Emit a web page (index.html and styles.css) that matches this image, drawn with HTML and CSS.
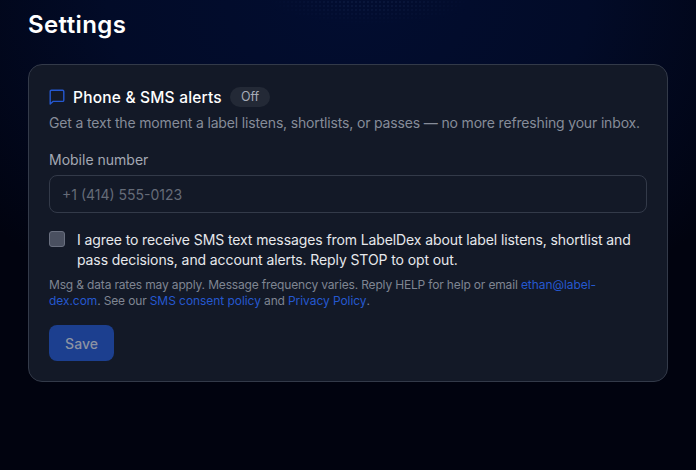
FILE: index.html
```html
<!DOCTYPE html>
<html lang="en">
<head>
    <meta charset="UTF-8">
    <meta name="viewport" content="width=device-width, initial-scale=1.0">
    <title>Settings</title>
    <link rel="stylesheet" href="styles.css">
</head>
<body>
    <div class="dots"></div>
    <main class="page">
        <h1>Settings</h1>
        <section class="card">
            <div class="card-head">
                <svg class="icon" width="16" height="16" viewBox="0 0 16 16" fill="none" stroke="#2558d0" stroke-width="1.4" stroke-linejoin="round">
                    <path d="M1.2 15V2.4c0-.7.5-1.2 1.2-1.2h11.2c.7 0 1.2.5 1.2 1.2v8.8c0 .7-.5 1.2-1.2 1.2H4z"/>
                </svg>
                <h2>Phone &amp; SMS alerts</h2>
                <span class="badge">Off</span>
            </div>
            <p class="lead">Get a text the moment a label listens, shortlists, or passes — no more refreshing your inbox.</p>

            <label class="field-label" for="phone">Mobile number</label>
            <input class="phone-input" id="phone" type="text" placeholder="+1 (414) 555-0123">

            <label class="consent">
                <span class="checkbox"></span>
                <span>I agree to receive SMS text messages from LabelDex about label listens, shortlist and pass decisions, and account alerts. Reply STOP to opt out.</span>
            </label>

            <p class="fineprint">Msg &amp; data rates may apply. Message frequency varies. Reply HELP for help or email <a href="#">ethan@label-</a><a href="#">dex.com</a>. See our <a href="#">SMS consent policy</a> and <a href="#">Privacy Policy</a>.</p>

            <button class="save-btn" disabled>Save</button>
        </section>
    </main>
</body>
</html>
```

FILE: styles.css
```css
* {
    box-sizing: border-box;
}
html, body {
    height: 100%;
}
body {
    margin: 0;
    font-family: 'Inter', sans-serif;
    color: #fff;
    overflow: hidden;
    position: relative;
    background:
        radial-gradient(ellipse 480px 340px at 50% 0%, #020d30 0%, #020b28 50%, rgba(2, 8, 28, 0) 100%),
        #01030f;
}
.dots {
    position: absolute;
    top: 0;
    left: 270px;
    width: 200px;
    height: 24px;
    background-image: radial-gradient(circle, rgba(120, 150, 220, 0.22) 0.5px, transparent 0.8px);
    background-size: 4px 4px;
    -webkit-mask-image: radial-gradient(ellipse at 50% 0%, #000 20%, transparent 75%);
    mask-image: radial-gradient(ellipse at 50% 0%, #000 20%, transparent 75%);
}
.page {
    position: relative;
    padding: 10px 28px;
}
h1 {
    margin: 0 0 24px;
    font-size: 24px;
    line-height: 30px;
    font-weight: 600;
    letter-spacing: 0.4px;
}
.card {
    background: #131927;
    border: 1px solid #333a49;
    border-radius: 14px;
    padding: 20px;
    height: 318px;
}
.card-head {
    display: flex;
    align-items: center;
    height: 24px;
}
.icon {
    margin-right: 8px;
}
h2 {
    margin: 0 8px 0 0;
    font-size: 15.5px;
    font-weight: 500;
    letter-spacing: 0.2px;
}
.badge {
    background: #232936;
    color: #a6acb8;
    font-size: 12.5px;
    line-height: 20px;
    padding: 0 11px;
    border-radius: 10px;
}
.lead {
    margin: 4px 0 0;
    font-size: 14px;
    line-height: 20px;
    color: #868c99;
    letter-spacing: -0.16px;
    white-space: nowrap;
}
.field-label {
    display: block;
    margin-top: 17px;
    font-size: 14px;
    line-height: 20px;
    color: #a3a8b3;
}
.phone-input {
    display: block;
    width: 100%;
    height: 38px;
    margin-top: 5px;
    padding: 0 12px;
    background: transparent;
    border: 1px solid #333a49;
    border-radius: 8px;
    font-family: inherit;
    font-size: 14px;
}
.phone-input::placeholder {
    color: #656b78;
}
.consent {
    display: flex;
    gap: 12px;
    margin-top: 17px;
    font-size: 14px;
    line-height: 20px;
    color: #e6e8ec;
    letter-spacing: -0.1px;
}
.checkbox {
    flex: none;
    width: 16px;
    height: 16px;
    margin-top: 1px;
    background: #4a5060;
    border: 1px solid #6a7080;
    border-radius: 3px;
}
.fineprint {
    margin: 7px 0 0;
    max-width: 560px;
    font-size: 12px;
    line-height: 16px;
    color: #7f8592;
    letter-spacing: -0.16px;
}
.fineprint a {
    color: #2558cf;
    text-decoration: none;
    letter-spacing: -0.06px;
}
.save-btn {
    display: block;
    margin-top: 16px;
    width: 65px;
    height: 36px;
    background: #1c3f8f;
    color: #8c93a3;
    border: none;
    border-radius: 8px;
    font-family: inherit;
    font-size: 14px;
    font-weight: 500;
}
```
